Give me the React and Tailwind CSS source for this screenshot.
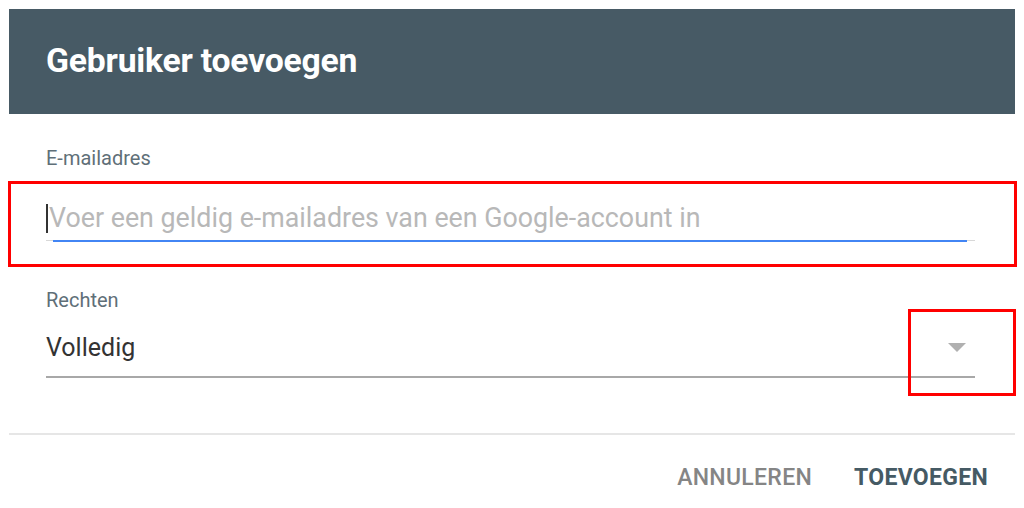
import React from "react";

export default function App() {
  const font = { fontFamily: "Roboto, 'Noto Sans', sans-serif" };
  return (
    <div className="relative w-[1024px] h-[508px] bg-white overflow-hidden" style={font}>
      <div className="mx-[9px] mt-[9px] h-[105px] bg-[#475a65] flex items-center pl-[37px]">
        <h1 className="text-[33.7px] font-bold text-white leading-none tracking-[-0.2px] mt-[-2px]">
          Gebruiker toevoegen
        </h1>
      </div>

      <div className="pl-[46px] pr-[49px]">
        <div className="mt-[34px] text-[20px] leading-[20px] text-[#5f6f78]">E-mailadres</div>
        <div className="mt-[35px] relative h-[30px] flex items-center">
          <span className="w-[2px] h-[29px] bg-[#333] mr-[1px]"></span>
          <span className="text-[26.8px] text-[#b8b8b8] leading-none">
            Voer een geldig e-mailadres van een Google-account in
          </span>
        </div>
        <div className="mt-[7px] flex h-[2px]">
          <div className="w-[7px] h-px bg-[#d8d8d8]"></div>
          <div className="flex-1 h-[2px] bg-[#4285f4]"></div>
          <div className="w-[8px] h-px bg-[#d8d8d8]"></div>
        </div>

        <div className="mt-[48px] text-[20px] leading-[20px] text-[#5f6f78]">Rechten</div>
        <div className="mt-[24px] flex items-center justify-between h-[26px]">
          <span className="text-[25px] text-[#333] leading-none">Volledig</span>
          <svg width="18" height="9" viewBox="0 0 18 9" className="mr-[9px] mt-[1px]">
            <polygon points="0,0 18,0 9,9" fill="#b0b0b0" />
          </svg>
        </div>
        <div className="mt-[16px] h-[2px] bg-[#a8a8a8]"></div>
      </div>

      <div className="mx-[9px] mt-[55px] h-[2px] bg-[#e6e6e6]"></div>

      <div className="flex justify-end pr-[36px] mt-[31px] gap-[42px] text-[23px] leading-none tracking-[0.3px]">
        <span className="text-[#858585] font-medium">ANNULEREN</span>
        <span className="text-[#455a64] font-bold">TOEVOEGEN</span>
      </div>

      <div className="absolute left-[8px] top-[181px] w-[1009px] h-[86px] border-[3px] border-[#ff0000]"></div>
      <div className="absolute left-[908px] top-[309px] w-[108px] h-[87px] border-[3px] border-[#ff0000]"></div>
    </div>
  );
}
